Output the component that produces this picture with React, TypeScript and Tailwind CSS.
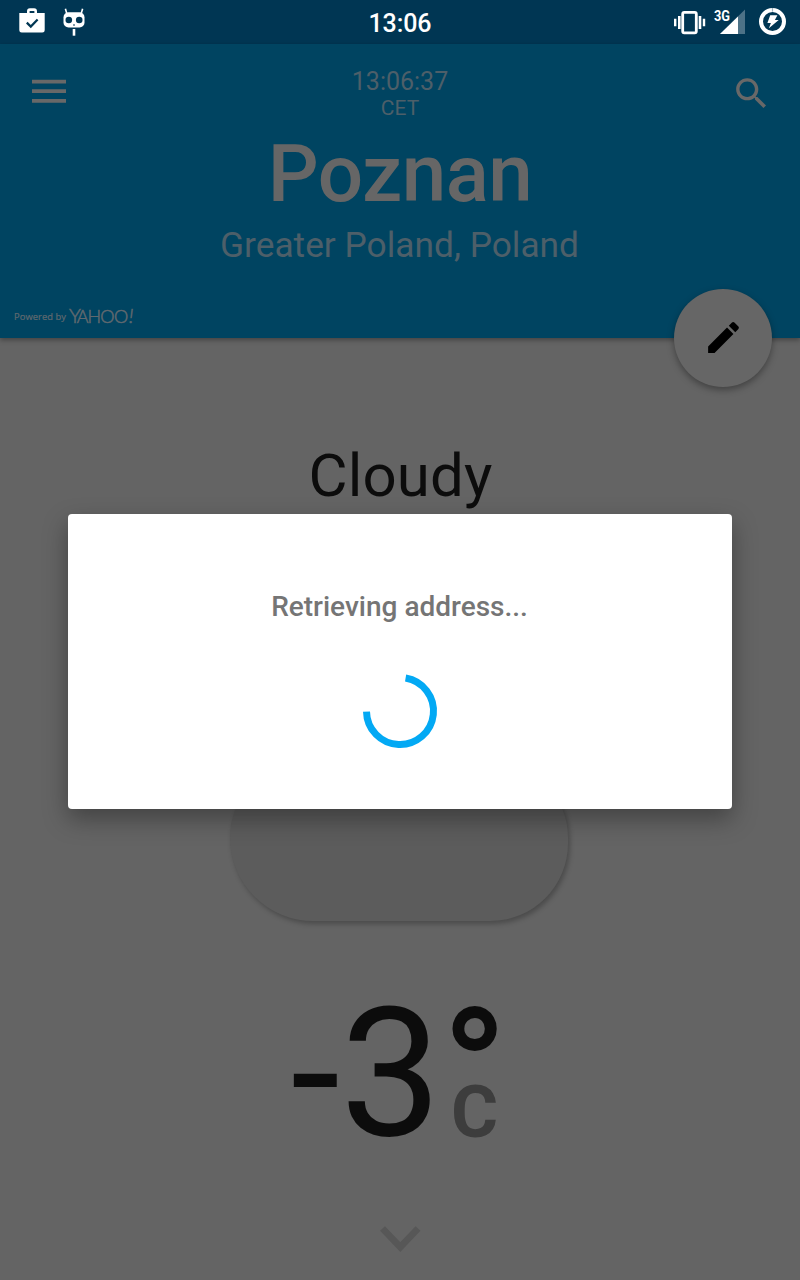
import React from "react";

function StatusBar() {
  return (
    <div className="grid h-11 grid-cols-3 items-start bg-[#003653] text-white">
      <svg width="100" height="44" viewBox="0 0 100 44">
        <path d="M19.3 13h25.4v17.2q0 2.4-2.4 2.4H21.7q-2.4 0-2.4-2.4z" fill="#fff" />
        <path d="M28.3 14v-2.8q0-1.6 1.6-1.6h4.2q1.6 0 1.6 1.6V14" fill="none" stroke="#fff" strokeWidth="2.6" />
        <path d="M26.8 22.6l4 4 6.8-7" fill="none" stroke="#003653" strokeWidth="2.2" />
        <rect x="63.5" y="12.3" width="21" height="15.2" rx="5" fill="#fff" />
        <path d="M65.4 8.8l1.6 5.5M82.6 8.8l-1.6 5.5" stroke="#fff" strokeWidth="1.6" />
        <circle cx="68.8" cy="20" r="3.3" fill="#003653" />
        <circle cx="79.2" cy="20" r="3.3" fill="#003653" />
        <path d="M73 25h2" stroke="#003653" strokeWidth="1" />
        <path d="M74 29v6.7" stroke="#fff" strokeWidth="2.6" />
      </svg>
      <span className="text-center text-[25px] leading-[47px] font-medium tracking-[-0.1px]">13:06</span>
      <svg className="justify-self-end" width="140" height="44" viewBox="660 0 140 44">
        <rect x="682.7" y="12.4" width="13.6" height="20.4" rx="1.6" fill="none" stroke="#fff" strokeWidth="2.8" />
        <path d="M679.3 16v13M700 16v13" stroke="#fff" strokeWidth="2.6" />
        <path d="M675.2 18.7v7.6M704 18.7v7.6" stroke="#fff" strokeWidth="2.4" />
        <path d="M745 9.5V34h-25z" fill="#4d7287" />
        <path d="M738 16.5V34h-18z" fill="#fff" />
        <text x="714" y="20.6" fontSize="14" fontWeight="700" fill="#fff" textLength="16" lengthAdjust="spacingAndGlyphs">3G</text>
        <circle cx="772.5" cy="21.5" r="11.5" fill="none" stroke="#fff" strokeWidth="4" />
        <path d="M772.5 8v3.6" stroke="#9fb3bf" strokeWidth="1.2" />
        <path d="M770.2 15.3h7.2l-2.5 4.6h3.8l-9.8 8.4 2-5.4h-3.5z" fill="#fff" />
      </svg>
    </div>
  );
}

function Header() {
  return (
    <header className="relative z-10 h-[294px] bg-[#004461] shadow-[0_2px_5px_rgba(0,0,0,0.35)]">
      <div className="grid h-full grid-cols-[100px_1fr_100px]">
        <div className="flex flex-col justify-between">
          <svg className="ml-8 mt-[35px]" width="34" height="25" viewBox="0 0 34 25">
            <path d="M0 2.7h34M0 12.2h34M0 21.8h34" stroke="#686868" strokeWidth="3.8" />
          </svg>
          <div className="mb-2.5 ml-3.5 flex h-6 w-32">
            <svg width="122" height="24" viewBox="0 0 122 24" fill="#60696f" stroke="#60696f">
              <text x="0" y="16" fontSize="9.4" fontFamily="Open Sans, sans-serif" textLength="52" strokeWidth=".2">Powered by</text>
              <text y="19.3" fontFamily="Lato, sans-serif" fontWeight="300" strokeWidth=".5">
                <tspan x="55" fontSize="20">Y</tspan>
                <tspan x="62.8 73.6 86.2 100" fontSize="18">AHOO</tspan>
                <tspan x="114.8" fontSize="20" fontStyle="italic">!</tspan>
              </text>
            </svg>
          </div>
        </div>
        <div className="flex flex-col items-center pt-[22px] text-[#4d5f69]">
          <div className="text-[25px] leading-[31px]">13:06:37</div>
          <div className="text-[21px] leading-[22px]">CET</div>
          <h1 className="mt-[9px] text-[80px] leading-[92px] font-medium tracking-[-0.5px] text-[#666666]">Poznan</h1>
          <div className="mt-1 pr-px text-[35.3px] leading-[42px]">Greater Poland, Poland</div>
        </div>
        <svg className="ml-[31px] mt-[29px]" width="41" height="41" viewBox="0 0 24 24" fill="#686868">
          <path d="M15.5 14h-.79l-.28-.27C15.41 12.59 16 11.11 16 9.5 16 5.91 13.09 3 9.5 3S3 5.91 3 9.5 5.91 16 9.5 16c1.61 0 3.09-.59 4.23-1.57l.27.28v.79l5 4.99L20.49 19l-4.99-5zm-6 0C7.01 14 5 11.99 5 9.5S7.01 5 9.5 5 14 7.01 14 9.5 11.99 14 9.5 14z" />
        </svg>
      </div>
      <button className="absolute right-7 -bottom-[49px] flex size-[98px] items-center justify-center rounded-full bg-[#666666] pb-px shadow-[0_3px_7px_rgba(0,0,0,0.35)]">
        <svg width="41" height="41" viewBox="0 0 24 24" fill="#000">
          <path d="M3 17.25V21h3.75L17.81 9.94l-3.75-3.75L3 17.25zM20.71 7.04c.39-.39.39-1.02 0-1.41l-2.34-2.34c-.39-.39-1.02-.39-1.41 0l-1.83 1.83 3.75 3.75 1.83-1.83z" />
        </svg>
      </button>
    </header>
  );
}

function Weather() {
  return (
    <main className="flex flex-1 flex-col items-center text-[#0c0c0c]">
      <h2 className="mt-[103px] pl-px text-[60px] leading-[70px] tracking-[0.1px]">Cloudy</h2>
      <div className="mt-[249px] mr-0.5 h-[161px] w-[338px] rounded-[80px] rounded-bl-[86px] bg-[#5c5c5c] shadow-[2px_3px_5px_rgba(0,0,0,0.25)]" />
      <div className="mt-12 flex h-[210px] w-[220px] pl-[0.5px]">
        <div className="text-[180px] leading-[210px]">-3</div>
        <div className="flex w-[60px] flex-col pl-[9.5px] font-bold">
          <div className="-ml-[9px] h-[111px] text-[168px] leading-[203px]">°</div>
          <div className="text-[72px] leading-[66px] text-[#3d3d3d]">C</div>
        </div>
      </div>
      <svg className="mt-[45px]" width="44" height="30" viewBox="0 0 44 30">
        <path d="M4.5 4.5L22.3 23 40 4.5" fill="none" stroke="#575757" strokeWidth="6.8" />
      </svg>
    </main>
  );
}

function LoadingDialog() {
  return (
    <div className="absolute inset-x-[68px] top-[514px] z-20 flex h-[295px] flex-col items-center rounded bg-white shadow-[0_10px_24px_rgba(0,0,0,0.34)]">
      <p className="mt-[77px] pr-px text-[28px] leading-8 font-medium text-[#757575]">Retrieving address...</p>
      <svg className="mt-12" width="80" height="80" viewBox="-40 -40 80 80">
        <path d="M5.6-33A33.5 33.5 0 1 1-33.5.6" fill="none" stroke="#03a9f4" strokeWidth="7" />
      </svg>
    </div>
  );
}

export default function App() {
  return (
    <div className="relative flex h-[1280px] w-[800px] flex-col overflow-hidden bg-[#646464] font-['Roboto',sans-serif]">
      <StatusBar />
      <Header />
      <Weather />
      <LoadingDialog />
    </div>
  );
}
